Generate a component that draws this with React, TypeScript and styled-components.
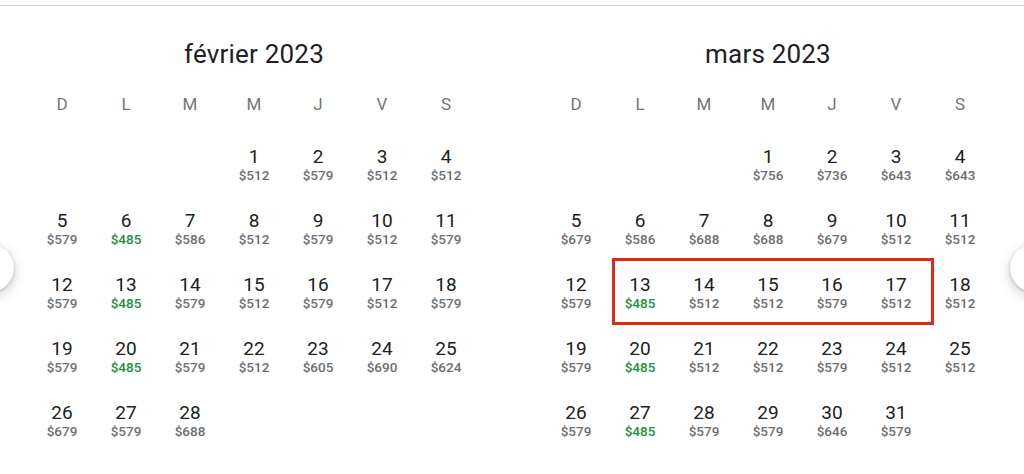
import React from "react";
import styled, { createGlobalStyle } from "styled-components";

const Global = createGlobalStyle`
  html, body { margin: 0; padding: 0; background: #fff; }
  body { font-family: Roboto, "Noto Sans", Arial, sans-serif; overflow: hidden; }
`;

const Page = styled.div`
  position: relative;
  width: 1024px;
  height: 474px;
  overflow: hidden;
  background: #fff;
`;

const TopRule = styled.div`
  margin-top: 5px;
  height: 1px;
  background: #d6d7d9;
`;

const Months = styled.div`
  display: flex;
  gap: 66px;
  padding-left: 30px;
`;

const Month = styled.section`
  width: 448px;
  display: flex;
  flex-direction: column;
`;

const Title = styled.h2`
  margin: 0;
  padding: 32px 0 5px;
  line-height: 32px;
  font-size: 26px;
  font-weight: 400;
  color: #202124;
  text-align: center;
  letter-spacing: 0.2px;
`;

const WeekRow = styled.div`
  display: grid;
  grid-template-columns: repeat(7, 64px);
  height: 58px;
  align-items: center;
`;

const WeekDay = styled.div`
  text-align: center;
  font-size: 17px;
  color: #757575;
  font-weight: 400;
`;

const Grid = styled.div`
  position: relative;
  display: grid;
  grid-template-columns: repeat(7, 64px);
  grid-auto-rows: 64px;
`;

const Cell = styled.div`
  display: flex;
  flex-direction: column;
  align-items: center;
  justify-content: center;
  padding-bottom: 2px;
  box-sizing: border-box;
`;

const DayNum = styled.div`
  font-size: 19px;
  line-height: 21px;
  color: #202124;
`;

const Price = styled.div<{ $low?: boolean }>`
  font-size: 13.5px;
  line-height: 16px;
  font-weight: 500;
  color: ${(p) => (p.$low ? "#1e8e3e" : "#6b6e72")};
`;

const Highlight = styled.div`
  position: absolute;
  left: 68px;
  top: 125px;
  width: 322px;
  height: 67px;
  border: 3px solid #dd2c14;
  box-sizing: border-box;
  pointer-events: none;
`;

const NavButton = styled.div<{ $side: "left" | "right" }>`
  position: absolute;
  top: 244px;
  ${(p) => (p.$side === "left" ? "left: -34px;" : "right: -34px;")}
  width: 48px;
  height: 48px;
  border-radius: 50%;
  background: #fff;
  box-shadow: 0 1px 3px rgba(60, 64, 67, 0.3), 0 4px 8px 3px rgba(60, 64, 67, 0.15);
`;

type Day = { d: number; p: number };

const weekdays = ["D", "L", "M", "M", "J", "V", "S"];
const LOW = 485;

const feb: Day[] = [
  [1, 512], [2, 579], [3, 512], [4, 512],
  [5, 579], [6, 485], [7, 586], [8, 512], [9, 579], [10, 512], [11, 579],
  [12, 579], [13, 485], [14, 579], [15, 512], [16, 579], [17, 512], [18, 579],
  [19, 579], [20, 485], [21, 579], [22, 512], [23, 605], [24, 690], [25, 624],
  [26, 679], [27, 579], [28, 688],
].map(([d, p]) => ({ d, p }));

const mar: Day[] = [
  [1, 756], [2, 736], [3, 643], [4, 643],
  [5, 679], [6, 586], [7, 688], [8, 688], [9, 679], [10, 512], [11, 512],
  [12, 579], [13, 485], [14, 512], [15, 512], [16, 579], [17, 512], [18, 512],
  [19, 579], [20, 485], [21, 512], [22, 512], [23, 579], [24, 512], [25, 512],
  [26, 579], [27, 485], [28, 579], [29, 579], [30, 646], [31, 579],
].map(([d, p]) => ({ d, p }));

function MonthView({
  title,
  offset,
  days,
  highlight,
}: {
  title: string;
  offset: number;
  days: Day[];
  highlight?: boolean;
}) {
  return (
    <Month>
      <Title>{title}</Title>
      <WeekRow>
        {weekdays.map((w, i) => (
          <WeekDay key={i}>{w}</WeekDay>
        ))}
      </WeekRow>
      <Grid>
        {Array.from({ length: offset }).map((_, i) => (
          <Cell key={"e" + i} />
        ))}
        {days.map((day) => (
          <Cell key={day.d}>
            <DayNum>{day.d}</DayNum>
            <Price $low={day.p === LOW}>${day.p}</Price>
          </Cell>
        ))}
        {highlight && <Highlight />}
      </Grid>
    </Month>
  );
}

export default function App() {
  return (
    <Page>
      <Global />
      <TopRule />
      <Months>
        <MonthView title="février 2023" offset={3} days={feb} />
        <MonthView title="mars 2023" offset={3} days={mar} highlight />
      </Months>
      <NavButton $side="left" />
      <NavButton $side="right" />
    </Page>
  );
}
